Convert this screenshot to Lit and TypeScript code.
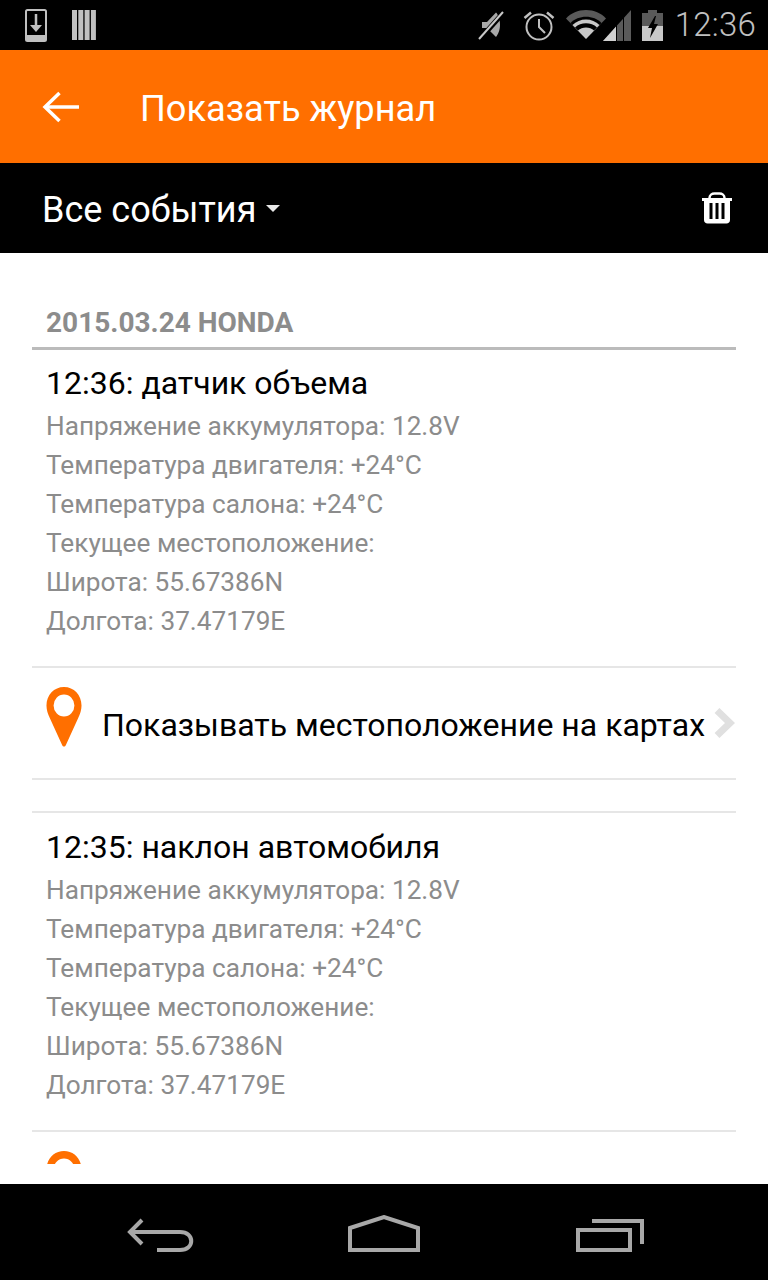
import { LitElement, html, css } from "lit";
import { customElement } from "lit/decorators.js";

const pin = html`<svg class="pin" viewBox="0 0 38 60" width="36" height="60" preserveAspectRatio="none"><path fill="#ff6f00" fill-rule="evenodd" d="M19 0C8.500 0 .5 8 .5 18.500C.5 23 2 27 4 31L17 58c1 2 3 2 4 0L34 31c2-4 3.500-8 3.500-12.500C37.500 8 29.500 0 19 0ZM19 7.500a11 11 0 1 1 0 22 11 11 0 0 1 0-22Z"/></svg>`;

const details = ["Напряжение аккумулятора: 12.8V", "Температура двигателя: +24°C", "Температура салона: +24°C", "Текущее местоположение:", "Широта: 55.67386N", "Долгота: 37.47179E"];

@customElement("app-root")
export class AppRoot extends LitElement {
  static styles = css`
    :host { display: flex; flex-direction: column; width: 768px; height: 1280px; overflow: hidden; background: #000; font-family: Roboto, "Noto Sans", sans-serif; }
    svg { display: block; flex: none; }
    .status { height: 50px; flex: none; background: #000; display: flex; align-items: center; padding: 0 12px 0 25px; }
    .status .l2 { margin-left: 25px; }
    .status .spacer { flex: 1; }
    .status .alarm { margin-left: 17px; }
    .status .wifi { margin-left: 11px; }
    .status .signal { margin-left: -3px; }
    .status .batt { margin-left: 11px; }
    .time { color: #c0c0c0; font-size: 33px; font-weight: 300; margin-left: 12px; line-height: 50px; letter-spacing: .2px; }
    .appbar { height: 113px; flex: none; background: #ff6f00; display: flex; align-items: center; color: #fff; padding-left: 42px; font-size: 36.200px; }
    .appbar svg { margin-right: 62px; }
    .appbar span { padding-top: 3px; margin-left: -1px; }
    .filter { height: 90px; flex: none; background: #000; color: #fff; display: flex; align-items: center; padding: 0 36px 0 43px; font-size: 36px; }
    .filter span { padding-top: 3px; margin-left: -1px; }
    .filter .caret { margin-left: 10px; }
    .filter .sp { flex: 1; }
    .content { height: 911px; flex: none; background: #fff; overflow: hidden; padding: 0 32px; margin-bottom: 20px; box-sizing: border-box; }
    .wrap { background: #fff; flex: none; }
    .date { margin-top: 51px; height: 46px; box-sizing: border-box; border-bottom: 3px solid #bbb; color: #8c8c8c; font-weight: 700; font-size: 28px; line-height: 38px; padding-left: 14px; }
    .title { color: #000; font-size: 32px; line-height: 36px; padding: 15px 0 0 14px; height: 36px; }
    .lines { padding: 6px 0 0 14px; margin-bottom: 25px; }
    .line { color: #8c8c8c; font-size: 26.200px; line-height: 39px; height: 39px; white-space: nowrap; }
    .link { border-top: 2px solid #e6e6e6; border-bottom: 2px solid #e6e6e6; height: 114px; box-sizing: border-box; display: flex; align-items: center; padding-left: 14px; color: #000; font-size: 32px; white-space: nowrap; }
    .link .pin { margin-right: 20px; margin-top: -12px; }
    .link span { flex: 1; padding-top: 4px; }
    .link .chev { margin-left: -12px; margin-right: 1px; }
    .gap { height: 31px; }
    .top { border-top: 2px solid #e6e6e6; padding-top: 1px; }
    .nav { height: 96px; flex: none; background: #000; display: flex; }
    .nav .back { margin-left: 127px; margin-top: 34px; }
    .nav .home { margin-left: 153px; margin-top: 31px; }
    .nav .recent { margin-left: 156px; margin-top: 35px; }
  `;

  private renderItem(time: string, top: boolean) {
    return html`
      <div class=${top ? "top" : ""}>
        <div class="title">${time}</div>
        <div class="lines">${details.map((d) => html`<div class="line">${d}</div>`)}</div>
      </div>`;
  }

  render() {
    return html`
      <div class="status">
        <svg width="22" height="33" viewBox="0 0 22 33"><rect x="1" y="1" width="20" height="31" rx="1.500" fill="none" stroke="#c0c0c0" stroke-width="2"/><rect x="1" y="26" width="20" height="6" fill="#c0c0c0"/><path d="M11 5v14" stroke="#c0c0c0" stroke-width="2.500"/><path d="M5 16h12l-6 7z" fill="#c0c0c0"/></svg>
        <svg class="l2" width="24" height="30" viewBox="0 0 24 30"><g fill="#c0c0c0"><rect x="0" y="0" width="5" height="30"/><rect x="6.300" y="0" width="5" height="30"/><rect x="12.600" y="0" width="5" height="30"/><rect x="18.900" y="0" width="5" height="30"/></g></svg>
        <div class="spacer"></div>
        <svg width="28" height="30" viewBox="0 0 28 30"><path d="M4 12h5l9-9.500c2 2 4 6 4 12s-2 10-4 12.500l-9-9H4z" fill="#a8a8a8"/><path d="M2 29 26 2" stroke="#000" stroke-width="5"/><path d="M1 29 25 2" stroke="#c8c8c8" stroke-width="2"/></svg>
        <svg class="alarm" width="32" height="31" viewBox="0 0 32 31" fill="none" stroke="#c0c0c0" stroke-width="2"><circle cx="16" cy="17" r="12.500"/><path d="M16 9v8l6 6" /><path d="M1.500 8 8 2.500M30.500 8 24 2.500" stroke-width="2.500"/></svg>
        <svg class="wifi" width="40" height="30" viewBox="0 0 40 30"><path d="M20 29 0 8.500C5 3 12 0 20 0s15 3 20 8.500z" fill="#5a5a5a"/><path d="M20 29 4.500 13C8.500 9 14 6.800 20 6.800s11.500 2.200 15.500 6.200z" fill="#000"/><path d="M20 29 6.500 15C10 11.500 15 9.500 20 9.500s10 2 13.500 5.500z" fill="#c8c8c8"/><path d="M9 17.500c3-2.800 7-4.200 11-4.200s8 1.400 11 4.200l-3 3c-2-2-5-3-8-3s-6 1-8 3z" fill="#000"/></svg>
        <svg class="signal" width="28" height="31" viewBox="0 0 28 31"><path d="M0 31 28 0v31z" fill="#5a5a5a"/><path d="M0 31 14 15.500V31z" fill="#d0d0d0"/><path d="M13 31V13h1v18zM20 31V6h1v25z" fill="#000"/></svg>
        <svg class="batt" width="21" height="31" viewBox="0 0 21 31"><rect x="6" y="0" width="9" height="3" fill="#5a5a5a"/><rect x="0" y="3" width="21" height="28" fill="#c8c8c8"/><rect x="0" y="3" width="21" height="13" fill="#5a5a5a"/><path d="M13 6 6 18h4l-2 10 8-14h-4l2-8z" fill="#000"/></svg>
        <div class="time">12:36</div>
      </div>
      <div class="appbar">
        <svg width="37" height="32" viewBox="0 0 37 32" fill="none" stroke="#fff" stroke-width="3.500"><path d="M37 16H3"/><path d="M17.500 2 3 16l14.500 14"/></svg>
        <span>Показать журнал</span>
      </div>
      <div class="filter">
        <span>Все события</span>
        <svg class="caret" width="14" height="7" viewBox="0 0 14 7"><path d="M0 0h14L7 7z" fill="#e8e8e8"/></svg>
        <div class="sp"></div>
        <svg width="30" height="32" viewBox="0 0 30 32"><path d="M0 7.500h30" stroke="#fff" stroke-width="3"/><path d="M7.500 7V6C7.500 3 10 1.500 12.500 1.500h5C20 1.500 22.500 3 22.500 6V7" stroke="#fff" stroke-width="2.500" fill="none"/><path d="M2 7h26v21c0 2.200-1.500 3.500-3.500 3.500h-19C3.500 31.500 2 30.200 2 28z" fill="#fff"/><path d="M7.500 11h3v16h-3zM13.500 11h3v16h-3zM19.500 11h3v16h-3z" fill="#000"/></svg>
      </div>
      <div class="wrap">
        <div class="content">
          <div class="date">2015.03.24 HONDA</div>
          ${this.renderItem("12:36: датчик объема", false)}
          <div class="link">
            ${pin}
            <span>Показывать местоположение на картах</span>
            <svg class="chev" width="22" height="30" viewBox="0 0 22 30"><path d="M4 2.500 17 15 4 27.500" fill="none" stroke="#e0e0e0" stroke-width="7"/></svg>
          </div>
          <div class="gap"></div>
          ${this.renderItem("12:35: наклон автомобиля", true)}
          <div class="link">
            ${pin}
            <span></span>
          </div>
        </div>
      </div>
      <div class="nav">
        <svg class="back" width="68" height="36" viewBox="0 0 68 36" fill="none" stroke="#a8a8a8" stroke-width="4"><path d="M15 2 3 14l12 12"/><path d="M3 14h50c15 0 15 18 0 18H30"/></svg>
        <svg class="home" width="72" height="37" viewBox="0 0 72 37" fill="none" stroke="#a8a8a8" stroke-width="4"><path d="M2 13 36 2l34 11v22H2z"/></svg>
        <svg class="recent" width="68" height="33" viewBox="0 0 68 33" fill="none" stroke="#a8a8a8" stroke-width="4"><rect x="2" y="11" width="52" height="20"/><path d="M16 2h50v23"/></svg>
      </div>
    `;
  }
}
